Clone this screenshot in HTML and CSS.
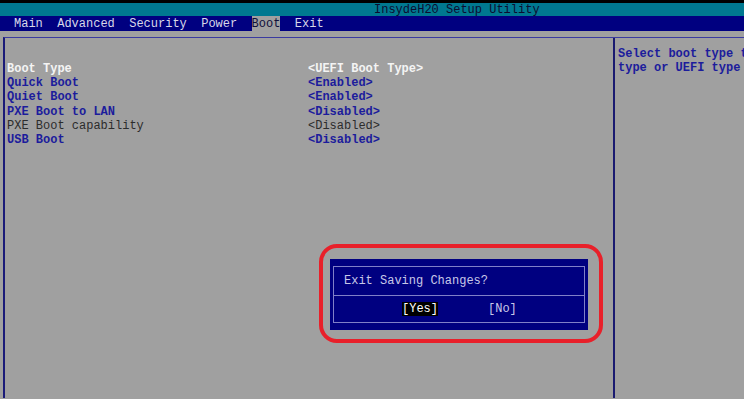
FILE: index.html
```html
<!DOCTYPE html>
<html lang="en">
<head>
    <meta charset="UTF-8">
    <title>InsydeH20 Setup Utility</title>
    <link rel="stylesheet" href="styles.css">
</head>
<body>
    <div class="screen">
        <div class="title-bar">InsydeH20 Setup Utility</div>

        <div class="menu-bar">
            <span class="tab">Main</span>
            <span class="tab">Advanced</span>
            <span class="tab">Security</span>
            <span class="tab">Power</span>
            <span class="tab active">Boot</span>
            <span class="tab">Exit</span>
        </div>

        <div class="frame">
            <div class="settings">
                <div class="row selected"><span class="label">Boot Type</span><span class="value">&lt;UEFI Boot Type&gt;</span></div>
                <div class="row"><span class="label">Quick Boot</span><span class="value">&lt;Enabled&gt;</span></div>
                <div class="row"><span class="label">Quiet Boot</span><span class="value">&lt;Enabled&gt;</span></div>
                <div class="row"><span class="label">PXE Boot to LAN</span><span class="value">&lt;Disabled&gt;</span></div>
                <div class="row locked"><span class="label">PXE Boot capability</span><span class="value">&lt;Disabled&gt;</span></div>
                <div class="row"><span class="label">USB Boot</span><span class="value">&lt;Disabled&gt;</span></div>
            </div>
            <div class="help">
                <p>Select boot type to</p>
                <p>type or UEFI type</p>
            </div>
        </div>

        <!-- confirmation popup, circled in red -->
        <div class="highlight"></div>
        <div class="dialog">
            <div class="dialog-inner">
                <div class="question">Exit Saving Changes?</div>
                <div class="answers">
                    <span class="answer active">[Yes]</span>
                    <span class="answer">[No]</span>
                </div>
            </div>
        </div>
    </div>
</body>
</html>
```

FILE: styles.css
```css
body {
    margin: 0;
    background-color: #000;
    font-family: "Liberation Mono", "DejaVu Sans Mono", monospace;
    font-size: 12px;
}
.screen {
    position: relative;
    width: 744px;
    height: 396px;
    margin-top: 3px;
    background-color: #a0a0a0;
    overflow: hidden;
}
.title-bar {
    height: 12px;
    padding-top: 1px;
    line-height: 13px;
    background-color: #007890;
    color: #0c0c30;
    padding-left: 374px;
    white-space: pre;
}
.menu-bar {
    display: flex;
    gap: 14.4px;
    height: 15px;
    line-height: 17px;
    background-color: #000080;
    padding-left: 14px;
}
.tab {
    color: #d8d8e8;
}
.tab.active {
    background-color: #a0a0a0;
    color: #10103a;
}
.frame {
    display: flex;
    margin-top: 6px;
    margin-left: 3px;
    height: 360px;
    border-top: 1px solid #3a3aa0;
    border-left: 2px solid #1a1a78;
}
.settings {
    flex-shrink: 0;
    width: 606px;
    padding-top: 24px;
    padding-left: 2px;
    border-right: 2px solid #1a1a70;
}
.row {
    display: flex;
    height: 14.2px;
    line-height: 14.2px;
    color: #1c1c9c;
    font-weight: bold;
}
.row .label {
    width: 301px;
}
.row.selected {
    color: #f4f4f4;
}
.row.locked {
    color: #2c2c2c;
    font-weight: normal;
}
.help {
    padding-top: 9px;
    padding-left: 3px;
    color: #1c1c9c;
    font-weight: bold;
    white-space: nowrap;
}
.help p {
    margin: 0;
    line-height: 14.2px;
}
.highlight {
    position: absolute;
    left: 319px;
    top: 241px;
    width: 276px;
    height: 91px;
    border: 4px solid #e8202a;
    border-radius: 18px;
}
.dialog {
    position: absolute;
    left: 330px;
    top: 256px;
    width: 252px;
    height: 57px;
    padding: 7px 3px;
    background-color: #000080;
}
.dialog-inner {
    height: 100%;
    box-sizing: border-box;
    border: 1px solid #8080c8;
    display: flex;
    flex-direction: column;
}
.question {
    height: 28px;
    line-height: 28px;
    padding-left: 10px;
    color: #c8c8e8;
    border-bottom: 1px solid #8080c8;
}
.answers {
    flex: 1;
    display: flex;
    align-items: center;
    gap: 50px;
    padding-left: 68px;
}
.answer {
    color: #c8c8e8;
    line-height: 14px;
}
.answer.active {
    background-color: #000;
    color: #fff;
}
```
